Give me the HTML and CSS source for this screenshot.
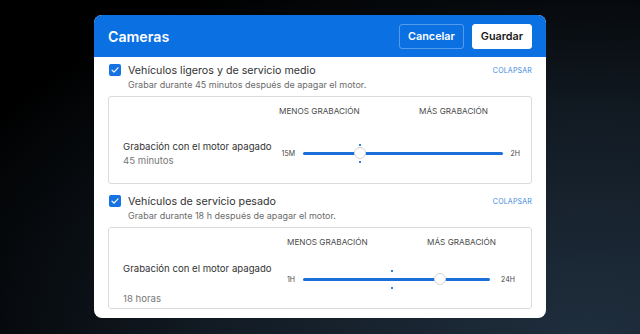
FILE: index.html
```html
<!DOCTYPE html>
<html lang="es">
  <head>
    <meta charset="UTF-8" />
    <meta name="viewport" content="width=device-width, initial-scale=1.0" />
    <title>Cameras</title>
    <link rel="stylesheet" href="styles.css">
  </head>
  <body>
    <div class="card">
      <div class="card-header">
        <h1>Cameras</h1>
        <div class="actions">
          <button class="btn btn-outline">Cancelar</button>
          <button class="btn btn-white">Guardar</button>
        </div>
      </div>

      <div class="card-body">
        <!-- Light and medium duty -->
        <div class="group">
          <div class="group-head">
            <span class="checkbox">
              <svg viewBox="0 0 12 12" width="12" height="12"><path d="M3 6.2l2 2 4-4.4" fill="none" stroke="#fff" stroke-width="1.2" stroke-linecap="round" stroke-linejoin="round"/></svg>
            </span>
            <span class="group-title">Vehículos ligeros y de servicio medio</span>
            <a class="collapse">COLAPSAR</a>
          </div>
          <p class="group-desc">Grabar durante 45 minutos después de apagar el motor.</p>
          <div class="panel panel-first">
            <div class="scale">
              <span>MENOS GRABACIÓN</span>
              <span>MÁS GRABACIÓN</span>
            </div>
            <div class="setting">
              <div class="setting-text">
                <div class="setting-name">Grabación con el motor apagado</div>
                <div class="setting-value">45 minutos</div>
              </div>
              <div class="slider">
                <span class="slider-min">15M</span>
                <div class="track">
                  <span class="tick" style="left: 28.7%"></span>
                  <span class="thumb" style="left: 28.7%"></span>
                </div>
                <span class="slider-max">2H</span>
              </div>
            </div>
          </div>
        </div>

        <!-- Heavy duty -->
        <div class="group">
          <div class="group-head">
            <span class="checkbox">
              <svg viewBox="0 0 12 12" width="12" height="12"><path d="M3 6.2l2 2 4-4.4" fill="none" stroke="#fff" stroke-width="1.2" stroke-linecap="round" stroke-linejoin="round"/></svg>
            </span>
            <span class="group-title">Vehículos de servicio pesado</span>
            <a class="collapse">COLAPSAR</a>
          </div>
          <p class="group-desc">Grabar durante 18 h después de apagar el motor.</p>
          <div class="panel panel-second">
            <div class="scale">
              <span>MENOS GRABACIÓN</span>
              <span>MÁS GRABACIÓN</span>
            </div>
            <div class="setting">
              <div class="setting-text spread">
                <div class="setting-name">Grabación con el motor apagado</div>
                <div class="setting-value">18 horas</div>
              </div>
              <div class="slider">
                <span class="slider-min">1H</span>
                <div class="track">
                  <span class="tick" style="left: 47.4%"></span>
                  <span class="thumb" style="left: 73.2%"></span>
                </div>
                <span class="slider-max">24H</span>
              </div>
            </div>
          </div>
        </div>
      </div>
    </div>
  </body>
</html>
```

FILE: styles.css
```css
body {
  margin: 0;
  height: 334px;
  overflow: hidden;
  font-family: Inter, "Noto Sans", sans-serif;
  background: radial-gradient(ellipse at 92% 100%, #1f2e3d 0%, #121b24 45%, #000 85%);
}

.card {
  width: 452px;
  margin: 15px auto 0;
  background-color: white;
  border-radius: 8px;
  overflow: hidden;
}

.card-header {
  height: 42px;
  padding: 0 14px;
  background-color: #0b70e2;
  display: flex;
  align-items: center;
  justify-content: space-between;
}

.card-header h1 {
  margin: 0;
  color: white;
  font-size: 14.2px;
  font-weight: 600;
}

.actions {
  display: flex;
  gap: 8px;
}

.btn {
  height: 25px;
  padding: 0 8px;
  border-radius: 3px;
  font-family: inherit;
  font-size: 10.8px;
  font-weight: 600;
  cursor: pointer;
}

.btn-outline {
  background: transparent;
  color: white;
  border: 1px solid rgba(255, 255, 255, 0.3);
}

.btn-white {
  background: white;
  color: #1a1a1a;
  border: 1px solid white;
}

.card-body {
  padding: 5px 14px 9px;
}

.group + .group {
  margin-top: 9px;
}

.group-head {
  display: flex;
  align-items: center;
  height: 16px;
}

.checkbox {
  width: 12px;
  height: 12px;
  border-radius: 2px;
  background-color: #1673e3;
  display: flex;
  margin-left: 1px;
}

.group-title {
  margin-left: 7px;
  font-size: 10.7px;
  color: #333;
  flex: 1;
}

.collapse {
  font-size: 7px;
  letter-spacing: 0.2px;
  color: #3a87dd;
}

.group-desc {
  margin: 1px 0 0 20px;
  font-size: 9px;
  color: #6b6b6b;
  line-height: 12px;
}

.panel {
  margin-top: 5px;
  border: 1px solid #dcdcdc;
  border-radius: 3px;
  padding: 9px 11px 0 14px;
}

.panel-first {
  padding-bottom: 16px;
}

.panel-second {
  padding-bottom: 3px;
}

.scale {
  margin-left: 156px;
  padding-right: 32px;
  display: flex;
  justify-content: space-between;
  font-size: 8.2px;
  color: #4a4a4a;
  line-height: 11px;
}

.panel-second .scale {
  margin-left: 164px;
  padding-right: 24px;
}

.setting {
  display: flex;
  align-items: center;
  margin-top: 23px;
}

.panel-second .setting {
  margin-top: 14px;
}

.panel-second .slider {
  margin-bottom: 9px;
}

.setting-text {
  width: 154px;
  display: flex;
  flex-direction: column;
  gap: 1px;
}

.setting-text.spread {
  gap: 17px;
}

.setting-name {
  font-size: 9.6px;
  color: #333;
  line-height: 13px;
  white-space: nowrap;
}

.setting-value {
  font-size: 9.6px;
  color: #777;
  line-height: 13px;
}

.slider {
  flex: 1;
  display: flex;
  align-items: center;
  font-size: 7px;
  color: #444;
}

.slider-min {
  width: 18px;
  text-align: right;
  margin-right: 8px;
}

.slider-max {
  margin-left: 8px;
}

.panel-second .slider-max {
  margin-left: 11px;
  margin-right: 5px;
}

.track {
  position: relative;
  flex: 1;
  height: 3px;
  border-radius: 2px;
  background-color: #1a6fd9;
}

.tick {
  position: absolute;
  top: -8px;
  width: 2px;
  height: 19px;
  margin-left: -1px;
  background: linear-gradient(#3a80d8 0 2px, transparent 2px 17px, #3a80d8 17px);
}

.thumb {
  position: absolute;
  top: -5px;
  width: 12px;
  height: 12px;
  margin-left: -6px;
  box-sizing: border-box;
  border-radius: 50%;
  background: white;
  border: 1px solid #d5d5d5;
}
```
